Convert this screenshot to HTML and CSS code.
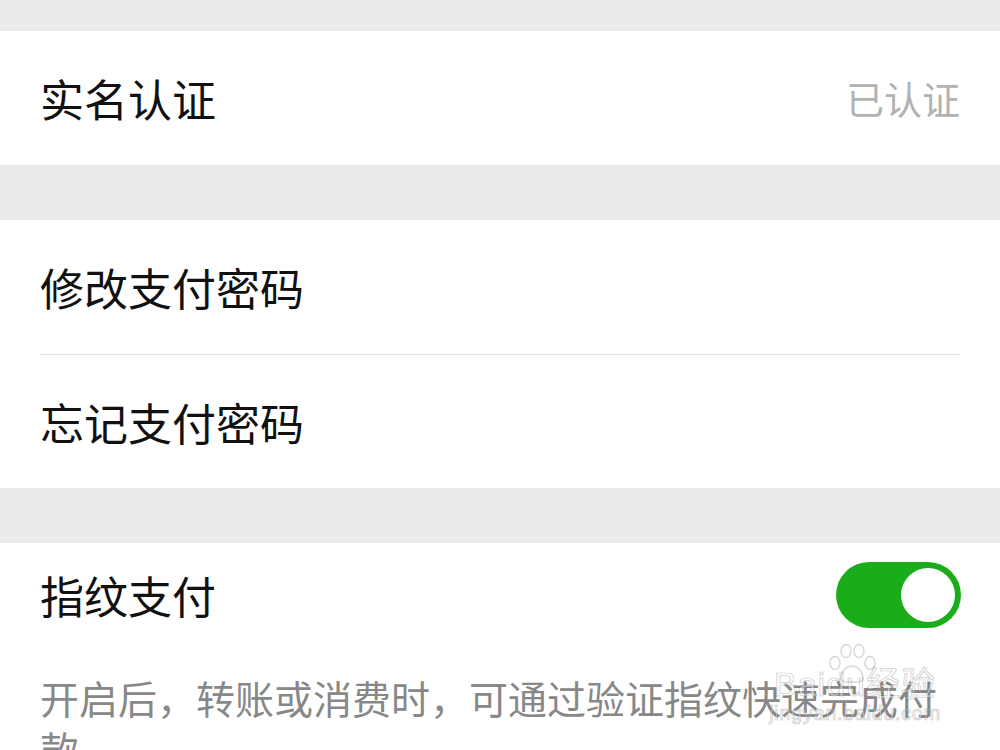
FILE: index.html
```html
<!DOCTYPE html>
<html lang="zh-CN">
<head>
    <meta charset="UTF-8">
    <title>支付管理</title>
    <link rel="stylesheet" href="styles.css">
</head>
<body>
    <div class="page">
        <div class="gap gap-top"></div>

        <div class="group">
            <div class="cell">
                <span class="cell-title">实名认证</span>
                <span class="cell-value">已认证</span>
            </div>
        </div>

        <div class="gap"></div>

        <div class="group">
            <div class="cell">
                <span class="cell-title">修改支付密码</span>
            </div>
            <div class="cell cell-line">
                <span class="cell-title">忘记支付密码</span>
            </div>
        </div>

        <div class="gap"></div>

        <div class="group group-last">
            <div class="cell cell-switch">
                <span class="cell-title">指纹支付</span>
                <div class="switch on"><span class="knob"></span></div>
            </div>
            <p class="cell-desc">开启后，转账或消费时，可通过验证指纹快速完成付款</p>

            <div class="watermark">
                <svg class="paw" viewBox="0 0 50 40" fill="none" stroke="rgba(0,0,0,0.16)" stroke-width="1.4">
                    <ellipse cx="8" cy="20" rx="5" ry="6.5"/>
                    <ellipse cx="19" cy="8" rx="5" ry="6.5"/>
                    <ellipse cx="32" cy="8" rx="5" ry="6.5"/>
                    <ellipse cx="43" cy="20" rx="5" ry="6.5"/>
                    <path d="M14 36c0-8 6-13 11-13s11 5 11 13c0 3-4 3-11 3s-11 0-11-3z"/>
                </svg>
                <div class="wm-name">Baidu经验</div>
                <div class="wm-url">jingyan.baidu.com</div>
            </div>
        </div>
    </div>
</body>
</html>
```

FILE: styles.css
```css
body {
    margin: 0;
    background: #ebebeb;
    font-family: "Noto Sans CJK SC", "Noto Sans", sans-serif;
    color: #111;
}

.page {
    width: 1000px;
    height: 750px;
    overflow: hidden;
}

.gap {
    height: 55px;
}

.gap-top {
    height: 31px;
}

.group {
    background: #fff;
    padding: 0 40px;
}

.cell {
    height: 134px;
    display: flex;
    align-items: center;
    justify-content: space-between;
}

.cell-line {
    border-top: 1px solid #e2e2e2;
    height: 133px;
}

.cell-title {
    font-size: 44px;
    line-height: 1;
}

.cell-value {
    font-size: 38px;
    line-height: 1;
    color: #b2b2b2;
}

.group-last {
    position: relative;
    height: 208px;
}

.cell-switch {
    height: auto;
    padding-top: 19px;
}

.switch {
    width: 125px;
    height: 66px;
    border-radius: 33px;
    background: #1aad19;
    position: relative;
    margin-right: -1px;
}

.switch .knob {
    position: absolute;
    top: 6px;
    right: 6px;
    width: 54px;
    height: 54px;
    border-radius: 50%;
    background: #fff;
}

.cell-desc {
    margin: 0;
    padding-top: 44px;
    font-size: 39px;
    line-height: 51px;
    color: #888;
}

.watermark {
    position: absolute;
    left: 762px;
    top: 98px;
    width: 186px;
    text-align: center;
    font-family: "Liberation Sans", "Noto Sans CJK SC", sans-serif;
    color: rgba(255, 255, 255, 0.45);
    -webkit-text-stroke: 1.2px rgba(0, 0, 0, 0.17);
}

.paw {
    position: absolute;
    left: 64px;
    top: 2px;
    width: 52px;
    height: 40px;
}

.wm-name {
    padding-top: 25px;
    font-size: 34px;
    line-height: 36px;
    letter-spacing: 1px;
}

.wm-url {
    font-size: 20px;
    line-height: 22px;
    letter-spacing: 0.6px;
}
```
